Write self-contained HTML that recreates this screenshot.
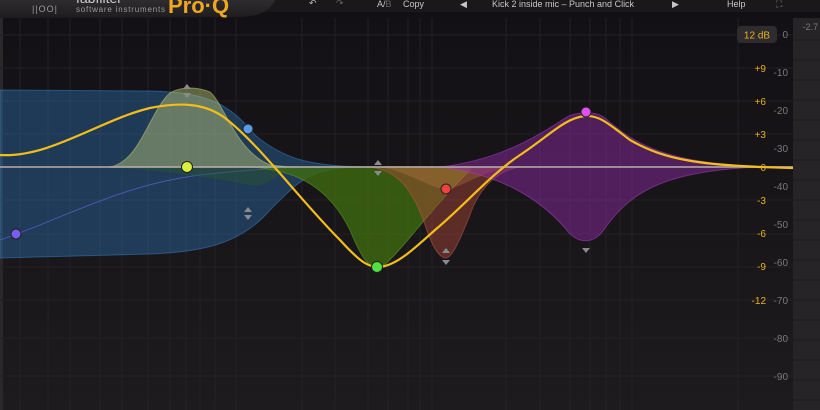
<!DOCTYPE html>
<html><head><style>
html,body{margin:0;padding:0;background:#141215;width:820px;height:410px;overflow:hidden;font-family:"Liberation Sans",sans-serif}
svg{display:block}
</style></head><body>
<svg width="820" height="410" viewBox="0 0 820 410" xmlns="http://www.w3.org/2000/svg">
<defs>
<linearGradient id="bg" x1="0" y1="0" x2="0" y2="1"><stop offset="0" stop-color="#121014"/><stop offset="1" stop-color="#1d1b1d"/></linearGradient>
<linearGradient id="hdr" x1="0" y1="0" x2="0" y2="1"><stop offset="0" stop-color="#2e2c2e"/><stop offset="1" stop-color="#1e1c1e"/></linearGradient>
</defs>
<rect width="820" height="410" fill="url(#bg)"/>
<rect x="0" y="0" width="3" height="410" fill="#2a282a"/>
<rect x="793" y="18" width="27" height="392" fill="#262426"/>
<g stroke="#1c1a1c" stroke-width="1">
<line x1="793" y1="40" x2="820" y2="40"/><line x1="793" y1="60" x2="820" y2="60"/><line x1="793" y1="80" x2="820" y2="80"/><line x1="793" y1="100" x2="820" y2="100"/><line x1="793" y1="120" x2="820" y2="120"/><line x1="793" y1="140" x2="820" y2="140"/><line x1="793" y1="160" x2="820" y2="160"/><line x1="793" y1="180" x2="820" y2="180"/><line x1="793" y1="200" x2="820" y2="200"/><line x1="793" y1="220" x2="820" y2="220"/><line x1="793" y1="240" x2="820" y2="240"/><line x1="793" y1="260" x2="820" y2="260"/><line x1="793" y1="280" x2="820" y2="280"/><line x1="793" y1="300" x2="820" y2="300"/><line x1="793" y1="320" x2="820" y2="320"/><line x1="793" y1="340" x2="820" y2="340"/><line x1="793" y1="360" x2="820" y2="360"/><line x1="793" y1="380" x2="820" y2="380"/><line x1="793" y1="400" x2="820" y2="400"/>
</g>
<g stroke="#232125" stroke-width="1">
<line x1="20" y1="18" x2="20" y2="410"/><line x1="48" y1="18" x2="48" y2="410"/><line x1="70" y1="18" x2="70" y2="410"/><line x1="100" y1="18" x2="100" y2="410"/><line x1="122" y1="18" x2="122" y2="410"/><line x1="148" y1="18" x2="148" y2="410"/><line x1="170" y1="18" x2="170" y2="410"/><line x1="186" y1="18" x2="186" y2="410"/><line x1="200" y1="18" x2="200" y2="410"/><line x1="215" y1="18" x2="215" y2="410"/><line x1="236" y1="18" x2="236" y2="410"/><line x1="302" y1="18" x2="302" y2="410"/><line x1="335" y1="18" x2="335" y2="410"/><line x1="368" y1="18" x2="368" y2="410"/><line x1="388" y1="18" x2="388" y2="410"/><line x1="408" y1="18" x2="408" y2="410"/><line x1="420" y1="18" x2="420" y2="410"/><line x1="432" y1="18" x2="432" y2="410"/><line x1="506" y1="18" x2="506" y2="410"/><line x1="540" y1="18" x2="540" y2="410"/><line x1="570" y1="18" x2="570" y2="410"/><line x1="590" y1="18" x2="590" y2="410"/><line x1="606" y1="18" x2="606" y2="410"/><line x1="620" y1="18" x2="620" y2="410"/><line x1="632" y1="18" x2="632" y2="410"/><line x1="738" y1="18" x2="738" y2="410"/>
<line x1="0" y1="35" x2="793" y2="35"/><line x1="0" y1="68" x2="793" y2="68"/><line x1="0" y1="101" x2="793" y2="101"/><line x1="0" y1="134" x2="793" y2="134"/><line x1="0" y1="200" x2="793" y2="200"/><line x1="0" y1="234" x2="793" y2="234"/><line x1="0" y1="267" x2="793" y2="267"/><line x1="0" y1="300" x2="793" y2="300"/><line x1="0" y1="338" x2="793" y2="338"/><line x1="0" y1="376" x2="793" y2="376"/>
</g>
<path d="M0 90 L150 91 C210 92 230 105 255 135 C285 160 310 165 360 167 L360 167 C310 168 300 180 270 210 C240 245 200 252 150 254 L0 258 Z" fill="#2d6fb0" fill-opacity="0.42" stroke="#3a82c8" stroke-opacity="0.5"/>
<path d="M0 240 C60 220 120 185 200 175 C260 168 300 167 360 167" fill="none" stroke="#6060d0" stroke-opacity="0.7" stroke-width="1"/>
<path d="M110 167 C140 162 150 110 170 93 C180 87 195 86 210 92 C225 105 235 150 270 165 L290 167 Z" fill="#c8d47a" fill-opacity="0.42" stroke="#c8d47a" stroke-opacity="0.5"/>
<path d="M110 167 C150 170 200 175 250 185 C270 190 280 167 300 167 Z" fill="#2a5a2a" fill-opacity="0.4"/>
<path d="M250 167 C300 170 330 190 350 230 C362 260 370 268 377 268 C390 268 420 220 470 170 L470 167 Z" fill="#3f6a10" fill-opacity="0.8" stroke="#5a9a20" stroke-opacity="0.6"/>
<path d="M370 167 C400 170 415 195 425 225 C435 255 442 258 446 258 C452 258 460 240 470 215 C480 185 500 170 520 167 Z" fill="#b04a3a" fill-opacity="0.45" stroke="#c05a4a" stroke-opacity="0.5"/>
<path d="M380 167 C410 172 430 189 446 189 C460 189 480 172 510 167 Z" fill="#c08040" fill-opacity="0.3"/>
<path d="M440 167 C500 160 540 135 565 118 C575 112 595 110 605 118 C630 140 660 163 760 167 C660 171 630 194 605 228 C595 244 578 246 565 228 C540 199 500 174 440 167 Z" fill="#8a2aa0" fill-opacity="0.5" stroke="#b040d0" stroke-opacity="0.5"/>
<line x1="0" y1="167" x2="793" y2="167" stroke="#b0a8a8" stroke-width="2" stroke-opacity="0.8"/>
<path d="M0 155 C50 158 100 120 150 108 C180 102 205 103 225 118 C260 145 300 200 340 240 C360 262 370 270 385 266 C400 262 415 248 435 230 C465 205 490 175 520 155 C550 135 565 118 585 116 C600 115 610 125 630 140 C665 160 700 166 793 168" fill="none" stroke="#f3bd1a" stroke-width="2.2"/>
<g fill="#8a8a8e">
<path d="M183 89 L191 89 L187 84 Z"/><path d="M183 93 L191 93 L187 98 Z"/>
<path d="M244 212 L252 212 L248 207 Z"/><path d="M244 215 L252 215 L248 220 Z"/>
<path d="M374 165 L382 165 L378 160 Z"/><path d="M374 171 L382 171 L378 176 Z"/>
<path d="M442 253 L450 253 L446 248 Z"/><path d="M442 260 L450 260 L446 265 Z"/>
<path d="M582 248 L590 248 L586 253 Z"/>
</g>
<circle cx="16" cy="234" r="5" fill="#7a5cf0" stroke="#222" stroke-width="1"/>
<circle cx="187" cy="167" r="5.5" fill="#d8f040" stroke="#222" stroke-width="1"/>
<circle cx="248" cy="129" r="5" fill="#5a9ae8" stroke="#222" stroke-width="1"/>
<circle cx="377" cy="267" r="5.5" fill="#50e040" stroke="#222" stroke-width="1"/>
<circle cx="446" cy="189" r="5" fill="#f04040" stroke="#222" stroke-width="1"/>
<circle cx="586" cy="112" r="5" fill="#e050f0" stroke="#222" stroke-width="1"/>
<g font-family="Liberation Sans, sans-serif" font-size="10" fill="#e8b020" text-anchor="end">
<text x="766" y="72">+9</text><text x="766" y="105">+6</text><text x="766" y="138">+3</text><text x="766" y="171">0</text><text x="766" y="204">-3</text><text x="766" y="237">-6</text><text x="766" y="270">-9</text><text x="766" y="304">-12</text>
</g>
<g font-family="Liberation Sans, sans-serif" font-size="10" fill="#7a787c" text-anchor="end">
<text x="788" y="38">0</text><text x="788" y="76">-10</text><text x="788" y="114">-20</text><text x="788" y="152">-30</text><text x="788" y="190">-40</text><text x="788" y="228">-50</text><text x="788" y="266">-60</text><text x="788" y="304">-70</text><text x="788" y="342">-80</text><text x="788" y="380">-90</text>
<text x="818" y="30" font-size="9">-2.7</text>
</g>
<rect x="737" y="26" width="40" height="17" rx="4" fill="#2e2c2e"/>
<text x="757" y="38.5" font-size="10" fill="#e8b020" text-anchor="middle">12 dB</text>
<rect x="0" y="0" width="820" height="12" fill="#1a181a"/>
<path d="M0 0 L275 0 C270 10 262 16 240 17 L0 18 Z" fill="url(#hdr)"/>
<g font-family="Liberation Sans, sans-serif" fill="#9a989c">
<text x="32" y="12" font-size="9" letter-spacing="1">||OO|</text>
<text x="76" y="12" font-size="8" letter-spacing="0.8">software instruments</text>
<text x="76" y="3" font-size="14" fill="#cfcdd0">fabfilter</text>
</g>
<text x="168" y="13" font-family="Liberation Sans, sans-serif" font-size="22" font-weight="bold" fill="#f0a820">Pro·Q</text>
<g font-family="Liberation Sans, sans-serif" font-size="9" fill="#c8c6ca">
<text x="309" y="6" fill="#bbb">↶</text><text x="336" y="6" fill="#666">↷</text>
<text x="377" y="7">A/<tspan fill="#666">B</tspan></text><text x="403" y="7">Copy</text>
<text x="460" y="7">◀</text>
<text x="492" y="7">Kick 2 inside mic – Punch and Click</text>
<text x="672" y="7">▶</text>
<text x="727" y="7">Help</text>
<text x="776" y="7" fill="#888">⛶</text>
</g>
</svg>
</body></html>
